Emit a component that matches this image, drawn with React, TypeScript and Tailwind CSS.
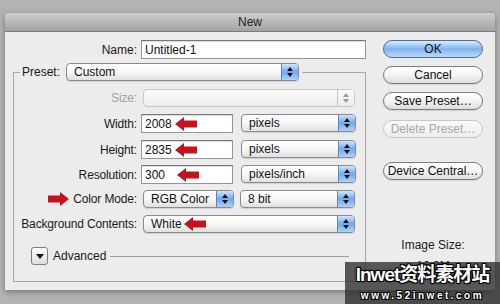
import React from "react";

const font = { fontFamily: '"Liberation Sans", Arial, sans-serif' };

function Stepper({ disabled = false }: { disabled?: boolean }) {
  const fill = disabled ? "#9a9a9a" : "#111";
  return (
    <span
      className={`flex w-[17px] flex-col items-center justify-center gap-[2px] border-l ${
        disabled
          ? "border-[#c4c4c4] bg-gradient-to-b from-[#fafafa] to-[#ececec]"
          : "border-[#5d84bb] bg-gradient-to-b from-[#cfe5fc] via-[#6fa9ec] to-[#acd3f8]"
      }`}
    >
      <svg width="6" height="4" viewBox="0 0 6 4">
        <polygon points="3,0 6,4 0,4" fill={fill} />
      </svg>
      <svg width="6" height="4" viewBox="0 0 6 4">
        <polygon points="0,0 6,0 3,4" fill={fill} />
      </svg>
    </span>
  );
}

function Popup({
  text,
  w,
  disabled = false,
  children,
}: {
  text?: string;
  w: string;
  disabled?: boolean;
  children?: React.ReactNode;
}) {
  return (
    <div
      className={`flex h-[18px] ${w} overflow-hidden rounded-[4px] border ${
        disabled
          ? "border-[#c8c8c8] bg-gradient-to-b from-[#fbfbfb] to-[#eeeeee]"
          : "border-[#8a8a8a] bg-gradient-to-b from-white via-[#f7f7f7] to-[#e0e0e0] shadow-[0_1px_1px_rgba(0,0,0,0.12)]"
      }`}
    >
      <span className="flex flex-1 items-center pl-[7px] text-[12px] leading-[16px] text-[#111]">
        {text}
        {children}
      </span>
      <Stepper disabled={disabled} />
    </div>
  );
}

function Field({ value, w, children }: { value: string; w: string; children?: React.ReactNode }) {
  return (
    <div
      className={`flex h-[19px] ${w} items-center border border-[#959595] border-t-[#777] bg-white pl-[3px] text-[12px] text-[#111] shadow-[inset_0_1px_1px_rgba(0,0,0,0.15)]`}
    >
      {value}
      {children}
    </div>
  );
}

function ArrowLeft({ className = "" }: { className?: string }) {
  return (
    <svg width="22" height="14" viewBox="0 0 22 14" className={className}>
      <polygon points="0,7 9,0 9,3.5 22,3.5 22,10.5 9,10.5 9,14" fill="#c4121f" />
    </svg>
  );
}

function ArrowRight({ className = "" }: { className?: string }) {
  return (
    <svg width="21" height="14" viewBox="0 0 21 14" className={className}>
      <polygon points="21,7 12,0 12,3.5 0,3.5 0,10.5 12,10.5 12,14" fill="#c4121f" />
    </svg>
  );
}

function Button({ label, primary = false, disabled = false }: { label: string; primary?: boolean; disabled?: boolean }) {
  return (
    <div
      className={`flex h-[18px] w-[100px] items-center justify-center rounded-full border text-[12px] ${
        primary
          ? "border-[#4b6e9f] bg-gradient-to-b from-[#d8ebfd] via-[#7db4ef] to-[#bcdcfa] text-[#111]"
          : disabled
          ? "border-[#c6c6c6] bg-gradient-to-b from-[#fafafa] to-[#eeeeee] text-[#a6a6a6]"
          : "border-[#7c7c7c] bg-gradient-to-b from-white via-[#f4f4f4] to-[#dddddd] text-[#111] shadow-[0_1px_1px_rgba(0,0,0,0.12)]"
      }`}
    >
      {label}
    </div>
  );
}

function Row({ label, children, mt, dim = false, lead }: { label: string; children: React.ReactNode; mt: string; dim?: boolean; lead?: React.ReactNode }) {
  return (
    <div className={`flex items-center ${mt}`}>
      <div className={`flex w-[123px] items-center justify-end text-[12px] tracking-[-0.15px] ${dim ? "text-[#a3a3a3]" : "text-[#1a1a1a]"}`}>
        {lead}
        {label}
      </div>
      {children}
    </div>
  );
}

export default function App() {
  return (
    <div className="relative h-[304px] w-[500px] overflow-hidden bg-[#b3b3b3] pl-[5px] pt-[13px]" style={font}>
      <div className="w-[490px] shadow-[0_2px_6px_rgba(0,0,0,0.35)]">
        <div className="flex h-[19px] items-center justify-center rounded-t-[4px] border-b border-[#7d7d7d] bg-gradient-to-b from-[#cfcfcf] to-[#a2a2a2] text-[12px] text-[#222]">
          New
        </div>
        <div className="flex h-[258px] bg-[#ececec] pl-[8px] pt-[8px]">
          <div className="w-[353px]">
            <div className="flex items-center">
              <div className="w-[124px] text-right text-[12px] text-[#1a1a1a]">Name:</div>
              <div className="ml-[4px]">
                <Field value="Untitled-1" w="w-[225px]" />
              </div>
            </div>

            <fieldset className="mt-[4px] h-[219px] border border-[#a8a8a8]">
              <legend className="ml-[6px] px-[2px]">
                <div className="flex items-center gap-[6px] pr-[1px]">
                  <span className="text-[12px] text-[#1a1a1a]">Preset:</span>
                  <Popup text="Custom" w="w-[233px]" />
                </div>
              </legend>

              <Row label="Size:" mt="mt-[8px]" dim>
                <div className="ml-[6px]">
                  <Popup w="w-[212px]" disabled />
                </div>
              </Row>
              <Row label="Width:" mt="mt-[7px]">
                <div className="ml-[4px] flex gap-[8px]">
                  <Field value="2008" w="w-[92px]">
                    <ArrowLeft className="ml-[3px]" />
                  </Field>
                  <Popup text="pixels" w="w-[115px]" />
                </div>
              </Row>
              <Row label="Height:" mt="mt-[7px]">
                <div className="ml-[4px] flex gap-[8px]">
                  <Field value="2835" w="w-[92px]">
                    <ArrowLeft className="ml-[3px]" />
                  </Field>
                  <Popup text="pixels" w="w-[115px]" />
                </div>
              </Row>
              <Row label="Resolution:" mt="mt-[6px]">
                <div className="ml-[4px] flex gap-[8px]">
                  <Field value="300" w="w-[92px]">
                    <ArrowLeft className="ml-[12px]" />
                  </Field>
                  <Popup text="pixels/inch" w="w-[115px]" />
                </div>
              </Row>
              <Row label="Color Mode:" mt="mt-[6px]" lead={<ArrowRight className="mr-[4px]" />}>
                <div className="ml-[6px] flex gap-[6px]">
                  <Popup text="RGB Color" w="w-[91px]" />
                  <Popup text="8 bit" w="w-[115px]" />
                </div>
              </Row>
              <Row label="Background Contents:" mt="mt-[7px]">
                <div className="ml-[6px]">
                  <Popup text="White" w="w-[212px]">
                    <ArrowLeft className="ml-[2px]" />
                  </Popup>
                </div>
              </Row>

              <div className="mt-[14px] flex items-center pl-[17px] pr-[16px]">
                <div className="flex h-[18px] w-[17px] items-center justify-center rounded-[3px] border border-[#7e7e7e] bg-gradient-to-b from-white to-[#dedede]">
                  <svg width="8" height="5" viewBox="0 0 8 5">
                    <polygon points="0,0 8,0 4,5" fill="#111" />
                  </svg>
                </div>
                <span className="ml-[5px] text-[12px] text-[#1a1a1a]">Advanced</span>
                <div className="ml-[4px] h-px flex-1 bg-[#9a9a9a]" />
              </div>
            </fieldset>
          </div>

          <div className="ml-[17px] flex w-[100px] flex-col items-center">
            <Button label="OK" primary />
            <div className="mt-[8px]">
              <Button label="Cancel" />
            </div>
            <div className="mt-[8px]">
              <Button label="Save Preset…" />
            </div>
            <div className="mt-[10px]">
              <Button label="Delete Preset…" disabled />
            </div>
            <div className="mt-[24px]">
              <Button label="Device Central…" />
            </div>
            <div className="mt-[56px] text-[12px] text-[#1a1a1a]">Image Size:</div>
            <div className="mt-[3px] text-[12px] text-[#1a1a1a]">16.3M</div>
          </div>
        </div>
      </div>

      <div className="absolute bottom-0 right-0 flex h-[42px] w-[155px] flex-col items-center bg-[rgba(45,45,45,0.78)] pt-[1px]">
        <div
          className="text-[19px] font-bold leading-[24px] tracking-[-1px] text-white [text-shadow:1px_1px_0_#000,-1px_-1px_0_#000,1px_-1px_0_#000,-1px_1px_0_#000,0_0_3px_#000]"
          style={{ fontFamily: '"Liberation Sans", "Noto Sans CJK SC", sans-serif' }}
        >
          Inwet资料素材站
        </div>
        <div className="mt-[3px] text-[10px] font-bold leading-[12px] tracking-[2.5px] text-white [text-shadow:1px_1px_0_#000,-1px_-1px_0_#000,1px_-1px_0_#000,-1px_1px_0_#000]">
          www.52inwet.com
        </div>
      </div>
    </div>
  );
}
